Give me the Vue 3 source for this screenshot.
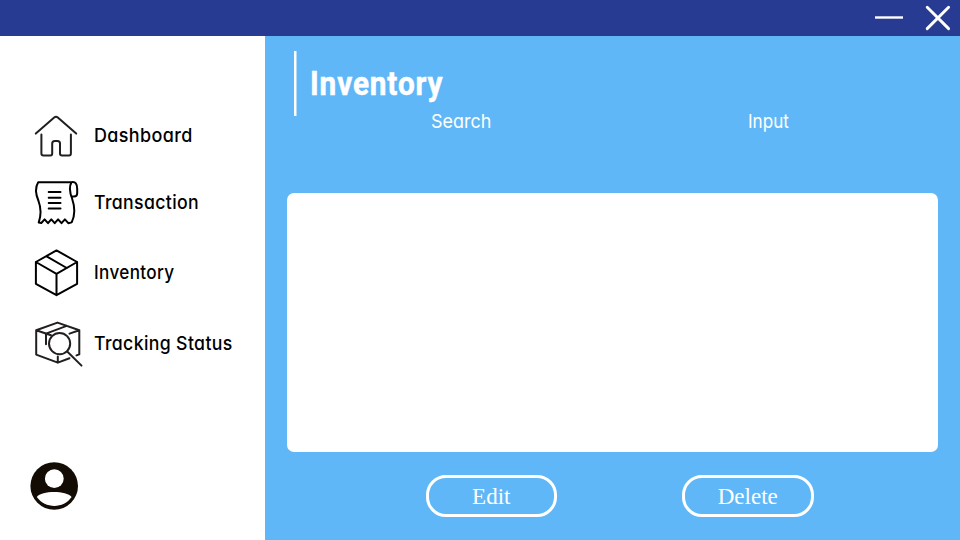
<script setup>
const items = [
  { id: 'home', label: 'Dashboard' },
  { id: 'receipt', label: 'Transaction' },
  { id: 'box', label: 'Inventory' },
  { id: 'track', label: 'Tracking Status' },
]
</script>

<template>
  <div class="window">
    <header class="titlebar">
      <button class="control" aria-label="Minimize">
        <svg width="30" height="26" viewBox="0 0 30 26"><path d="M1 12.5H29" /></svg>
      </button>
      <button class="control" aria-label="Close">
        <svg width="26" height="26" viewBox="0 0 26 26"><path d="M2.2 2.2L23.6 23.6M23.6 2.2L2.2 23.6" stroke-width="2.9" stroke-linecap="round" /></svg>
      </button>
    </header>
    <div class="body">
      <aside class="sidebar">
        <nav class="nav">
          <a v-for="item in items" :key="item.id" class="item" :class="item.id">
            <svg v-if="item.id === 'home'" class="icon" width="54" height="50" viewBox="30 110 54 50">
              <path d="M35.8 133.6L54.2 117.6Q56 116 57.8 117.6L76.2 133.6M41.4 134.4V153.4Q41.4 155.4 43.4 155.4H50.4Q52.2 155.4 52.2 153.4V143.5Q52.2 141 54.7 141H57.5Q60 141 60 143.5V153.4Q60 155.4 62 155.4H69Q70.9 155.4 70.9 153.4V134.4" />
            </svg>
            <svg v-else-if="item.id === 'receipt'" class="icon" width="54" height="50" viewBox="30 177 54 50">
              <path d="M71.5 182.2H38.2C34.6 188 36 195 38.5 201C41.5 209 41.3 215 38.7 222.6L41.3 223L44.6 219.4L48 223.2L51.3 219.4L54.7 223.2L58.1 219.4L61.5 223.2L64.9 219.4L68.3 223.2L71.7 222.4C75.7 214 75 207 72.2 199C69.9 193 68.6 187 71.5 182.2C75.5 181.3 77.2 184 77.2 189V193.2Q77.2 196.4 74 196.4H71.3" />
              <path d="M48.7 192H60.5M48.7 197.7H60.5M48.7 203.1H60.5M48.7 208.6H60.5" />
            </svg>
            <svg v-else-if="item.id === 'box'" class="icon" width="54" height="50" viewBox="30 248 54 50">
              <path d="M56.5 250.4L77.1 262V283.8L56.5 295.2L35.9 283.8V262ZM35.9 262L56.5 273.8L77.1 262M56.5 273.8V295.2M46.2 256.2L66.8 268" />
            </svg>
            <svg v-else class="icon" width="54" height="50" viewBox="30 319 54 50">
              <path d="M57.8 362.6L36.2 354.6V330.2L57.5 322.6L79.3 330.2V354.4L76.5 355.4M57.8 362.6L69.5 358.2M36.2 330.2L51 335.3M69.5 333.6L79.3 330.2M46 344.3V333.6L66.7 325.9M57.8 356.4V362.6" />
              <circle cx="59.6" cy="343.6" r="10.6" />
              <path d="M67.2 351.5L81.5 365.6" />
            </svg>
            <span class="label">{{ item.label }}</span>
          </a>
        </nav>
        <svg class="avatar" width="48" height="48" viewBox="0 0 48 48">
          <circle cx="24.2" cy="24" r="23.8" fill="#120c05" />
          <circle cx="24.3" cy="16.7" r="9.4" fill="#fff" />
          <path d="M6.8 35.1C11.5 28.4 36.5 28.4 41.6 35.1C33.5 47 15.2 47 6.8 35.1Z" fill="#fff" />
        </svg>
      </aside>
      <main class="main">
        <div class="heading"><h1>Inventory</h1></div>
        <div class="fields">
          <span class="search">Search</span>
          <span class="input">Input</span>
        </div>
        <section class="panel"></section>
        <div class="actions">
          <button class="action">Edit</button>
          <button class="action">Delete</button>
        </div>
      </main>
    </div>
  </div>
</template>

<style>
body { margin: 0; }
</style>

<style scoped>
.window {
  width: 960px;
  height: 540px;
  display: flex;
  flex-direction: column;
  overflow: hidden;
  font-family: Inter, "Liberation Sans", sans-serif;
}
.titlebar {
  flex: none;
  box-sizing: border-box;
  height: 35.5px;
  padding: 5px 9px 0 0;
  display: flex;
  justify-content: flex-end;
  gap: 23px;
  background: #273b92;
}
button { margin: 0; padding: 0; border: 0; background: none; }
.control { width: 26px; height: 26px; display: flex; justify-content: center; }
.control svg { flex: none; fill: none; stroke: #fff; stroke-width: 2.4; }
.body { flex: 1; display: flex; min-height: 0; }
.sidebar {
  box-sizing: border-box;
  width: 264.5px;
  padding: 74.5px 0 30px 30px;
  display: flex;
  flex-direction: column;
  justify-content: space-between;
  background: #fff;
}
.nav { display: flex; flex-direction: column; }
.item { display: flex; height: 50px; color: #000; }
.receipt { margin-top: 17px; }
.box, .track { margin-top: 21px; }
.icon { flex: none; fill: none; stroke: #000; stroke-width: 2; stroke-linejoin: round; stroke-linecap: round; }
.home .icon, .track .icon { stroke: #231f20; }
.label {
  margin-left: 9.5px;
  font-size: 19px;
  line-height: 50px;
  font-weight: 500;
  font-feature-settings: "cv11";
  letter-spacing: 0.4px;
  white-space: nowrap;
  transform: scaleX(0.93);
  transform-origin: left;
}
.home .label, .receipt .label { line-height: 52px; }
.home .label { transform: scaleX(0.945); }
.box .label { transform: scaleX(0.9); }
.avatar { display: block; }
.main {
  box-sizing: border-box;
  flex: 1;
  padding: 15.5px 22.5px 0 22.5px;
  background: #5fb7f7;
  display: flex;
  flex-direction: column;
  color: #fff;
}
.heading {
  height: 65px;
  margin-left: 7px;
  padding-left: 15.5px;
  background: linear-gradient(#fff, #fff) 0.2px 0 / 2.5px 100% no-repeat;
}
h1 {
  margin: 0;
  font: 700 34px/65px Roboto, sans-serif;
  letter-spacing: 1px;
  -webkit-text-stroke: 0.5px #fff;
  width: max-content;
  transform: scaleX(0.875);
  transform-origin: left;
}
.fields {
  height: 77px;
  display: grid;
  grid-template-columns: 316.5px 1fr;
  padding-left: 144px;
  box-sizing: border-box;
  font-size: 19px;
  line-height: 12px;
  font-weight: 400;
  font-feature-settings: "cv11";
}
.fields span { transform: scaleX(0.945); transform-origin: left; }
.fields .input { transform: scaleX(0.9); }
.panel { height: 259px; border-radius: 7px; background: #fff; }
.actions { display: flex; gap: 125px; margin: 23px 0 0 138.5px; }
.action {
  box-sizing: border-box;
  width: 131.5px;
  height: 42px;
  border: 3px solid #fff;
  border-radius: 20px;
  color: #fff;
  font: 400 23px/38px "Liberation Serif", serif;
}
</style>
